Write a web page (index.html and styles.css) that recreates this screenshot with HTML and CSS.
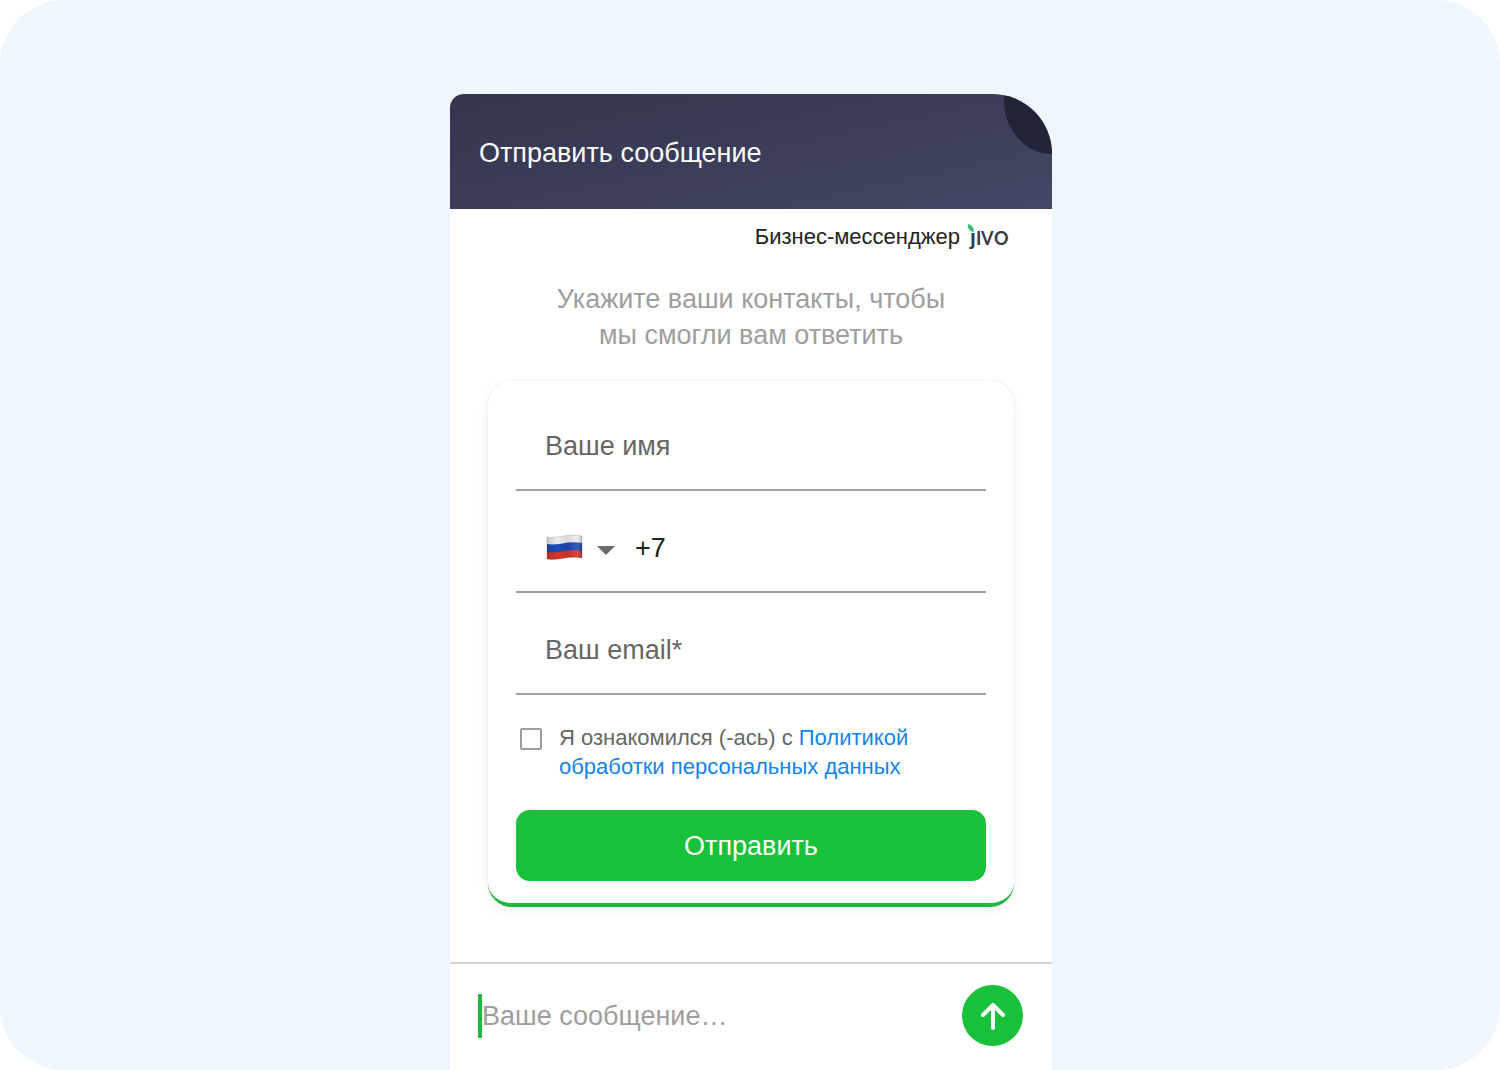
FILE: index.html
```html
<!DOCTYPE html>
<html lang="ru">
<head>
<meta charset="utf-8">
<meta name="viewport" content="width=device-width, initial-scale=1">
<title>Отправить сообщение</title>
<link rel="stylesheet" href="styles.css">
</head>
<body>
<main class="stage">
  <section class="widget">
    <header class="widget-header">
      <h1 class="widget-title">Отправить сообщение</h1>
      <button class="corner-close" type="button" aria-label="Закрыть"></button>
    </header>
    <div class="widget-body">
      <a class="brand" href="#">
        <span>Бизнес-мессенджер</span>
        <svg class="brand-logo" width="44" height="28" viewBox="0 0 44 28" role="img" aria-label="jivo">
          <path d="M2 1C6 2 8.500 5 7.500 9C3.500 8.500 1 5 2 1Z" fill="#3dba7c"/>
          <g class="brand-word">
            <text x="4" y="22" font-size="23">ȷ</text>
            <text x="10" y="22" font-size="18">I</text>
            <text x="15" y="22" font-size="18">V</text>
            <text x="28" y="22" font-size="18">O</text>
          </g>
        </svg>
      </a>
      <p class="prompt">Укажите ваши контакты, чтобы<br>мы смогли вам ответить</p>
      <form class="card">
        <div class="field">
          <input class="field-input" type="text" aria-label="Ваше имя" placeholder="Ваше имя">
        </div>
        <div class="field">
          <div class="country">
            <svg width="38" height="28" viewBox="0 0 38 28" aria-hidden="true">
              <defs>
                <linearGradient id="wave">
                  <stop offset="0" stop-color="#000" stop-opacity=".14"/>
                  <stop offset=".3" stop-color="#000" stop-opacity="0"/>
                  <stop offset=".6" stop-color="#000" stop-opacity=".08"/>
                  <stop offset=".85" stop-color="#fff" stop-opacity=".1"/>
                  <stop offset="1" stop-color="#000" stop-opacity=".2"/>
                </linearGradient>
              </defs>
              <path d="M2 3C13 5 23-1 37 2V10C23 7 13 13 2 11Z" fill="#ebebeb"/>
              <path d="M2 10C13 12 23 6 37 9V18C23 15 13 21 2 19Z" fill="#1e4cb4"/>
              <path d="M2 18C13 20 23 14 37 17V24C23 21 13 27 2 25Z" fill="#d8352c"/>
              <path d="M2 3C13 5 23-1 37 2V24C23 21 13 27 2 25Z" fill="url(#wave)" stroke="#000" stroke-opacity=".15"/>
            </svg>
            <svg class="country-arrow" width="18" height="9" viewBox="0 0 18 9" aria-hidden="true"><path d="M0 0H18L9 9Z" fill="#6b6b6b"/></svg>
            <select class="country-select" aria-label="Код страны">
              <option>Россия +7</option>
            </select>
          </div>
          <input class="field-input field-phone" type="tel" aria-label="Телефон" value="+7">
        </div>
        <div class="field">
          <input class="field-input" type="email" aria-label="Ваш email" placeholder="Ваш email*">
        </div>
        <div class="consent">
          <input class="consent-box" type="checkbox" id="consent">
          <label class="consent-text" for="consent">Я ознакомился (-ась) с <a href="#">Политикой<br>обработки персональных данных</a></label>
        </div>
        <button class="submit" type="submit">Отправить</button>
      </form>
    </div>
    <form class="composer">
      <input class="composer-input" type="text" aria-label="Ваше сообщение" placeholder="Ваше сообщение…">
      <button class="send" type="button" aria-label="Отправить сообщение">
        <svg width="28" height="30" viewBox="0 0 28 30" aria-hidden="true"><path d="M14 27V4M4 14L14 4L24 14" fill="none" stroke="#fff" stroke-width="4" stroke-linecap="round" stroke-linejoin="round"/></svg>
      </button>
    </form>
  </section>
</main>
</body>
</html>
```
FILE: styles.css
```css
* {
  box-sizing: border-box;
}

body {
  margin: 0;
  background: #fff;
  font-family: "Liberation Sans", Arial, sans-serif;
  font-size: 27px;
}

button,
input,
select {
  font: inherit;
}

button {
  border: 0;
  padding: 0;
  cursor: pointer;
}

input {
  border: 0;
  border-radius: 0;
  outline: 0;
  background: none;
}

.stage {
  display: flex;
  justify-content: center;
  min-height: 100vh;
  padding: 94px 14px 0 16px;
  border-radius: 64px;
  background: #f0f6fe;
}

.widget {
  display: flex;
  flex-direction: column;
  width: 100%;
  max-width: 602px;
  border-radius: 14px 60px 0 0;
  background: #fff;
  overflow: hidden;
}

.widget-header {
  position: relative;
  display: flex;
  align-items: center;
  padding: 44px 29px 40px;
  background: linear-gradient(168deg, #34364e, #3c3e5a 55%, #434866);
  color: #fff;
}

.widget-title {
  margin: 0;
  font-size: 27px;
  font-weight: 400;
  line-height: 31px;
}

.corner-close {
  position: absolute;
  top: 0;
  right: 0;
  width: 48px;
  height: 60px;
  border-bottom-left-radius: 54px 60px;
  background: #222438;
}

.widget-body {
  flex: 1;
  display: flex;
  flex-direction: column;
  padding: 14px 38px 55px;
}

.brand {
  display: flex;
  align-items: center;
  align-self: flex-end;
  gap: 6px;
  padding-right: 4px;
  color: #222;
  font-size: 22px;
  line-height: 28px;
  text-decoration: none;
}

.brand-word {
  fill: #3a3b40;
  font-family: Lato, sans-serif;
  font-weight: 700;
}

.prompt {
  margin: 30px 0 28px;
  color: #9e9e9e;
  line-height: 36px;
  text-align: center;
}

.card {
  padding: 8px 28px 22px;
  border-bottom: 4px solid #1fb841;
  border-radius: 24px;
  background: #fff;
  box-shadow: 0 4px 14px rgba(0, 0, 0, 0.06), 0 0 2px rgba(0, 0, 0, 0.1);
}

.field {
  display: flex;
  align-items: center;
  height: 102px;
  padding: 14px 29px 0;
  border-bottom: 2px solid #a2a2a2;
}

.field-input {
  flex: 1;
  min-width: 0;
  height: 56px;
  padding: 0;
  color: #222;
}

.field-input::placeholder {
  color: #666;
  opacity: 1;
}

.country {
  position: relative;
  display: flex;
  align-items: center;
  gap: 14px;
  margin-right: 20px;
}

.country-arrow {
  margin-top: 4px;
}

.country-select {
  position: absolute;
  inset: 0;
  width: 100%;
  opacity: 0;
  cursor: pointer;
}

.consent {
  display: flex;
  align-items: flex-start;
  gap: 17px;
  margin: 28px 0 29px;
  padding-left: 4px;
  color: #666;
  font-size: 22px;
  line-height: 29px;
}

.consent-box {
  appearance: none;
  flex: none;
  width: 22px;
  height: 22px;
  margin: 5px 0 0;
  border: 2px solid #9c9c9c;
  border-radius: 2px;
}

.consent-box:checked {
  background: #18c139;
}

.consent a {
  color: #1484ec;
  text-decoration: none;
}

.submit {
  display: block;
  width: 100%;
  height: 71px;
  padding-top: 2px;
  border-radius: 14px;
  background: #18c139;
  color: #fff;
}

.composer {
  display: flex;
  align-items: center;
  gap: 16px;
  padding: 21px 29px 24px 28px;
  border-top: 2px solid #d4d4d4;
}

.composer-input {
  flex: 1;
  min-width: 0;
  height: 44px;
  padding: 2px 0 0;
  border-left: 4px solid #1fb841;
  color: #222;
}

.composer-input::placeholder {
  color: #9e9e9e;
  opacity: 1;
}

.send {
  display: grid;
  place-items: center;
  width: 61px;
  height: 61px;
  border-radius: 50%;
  background: #18c139;
}
```
